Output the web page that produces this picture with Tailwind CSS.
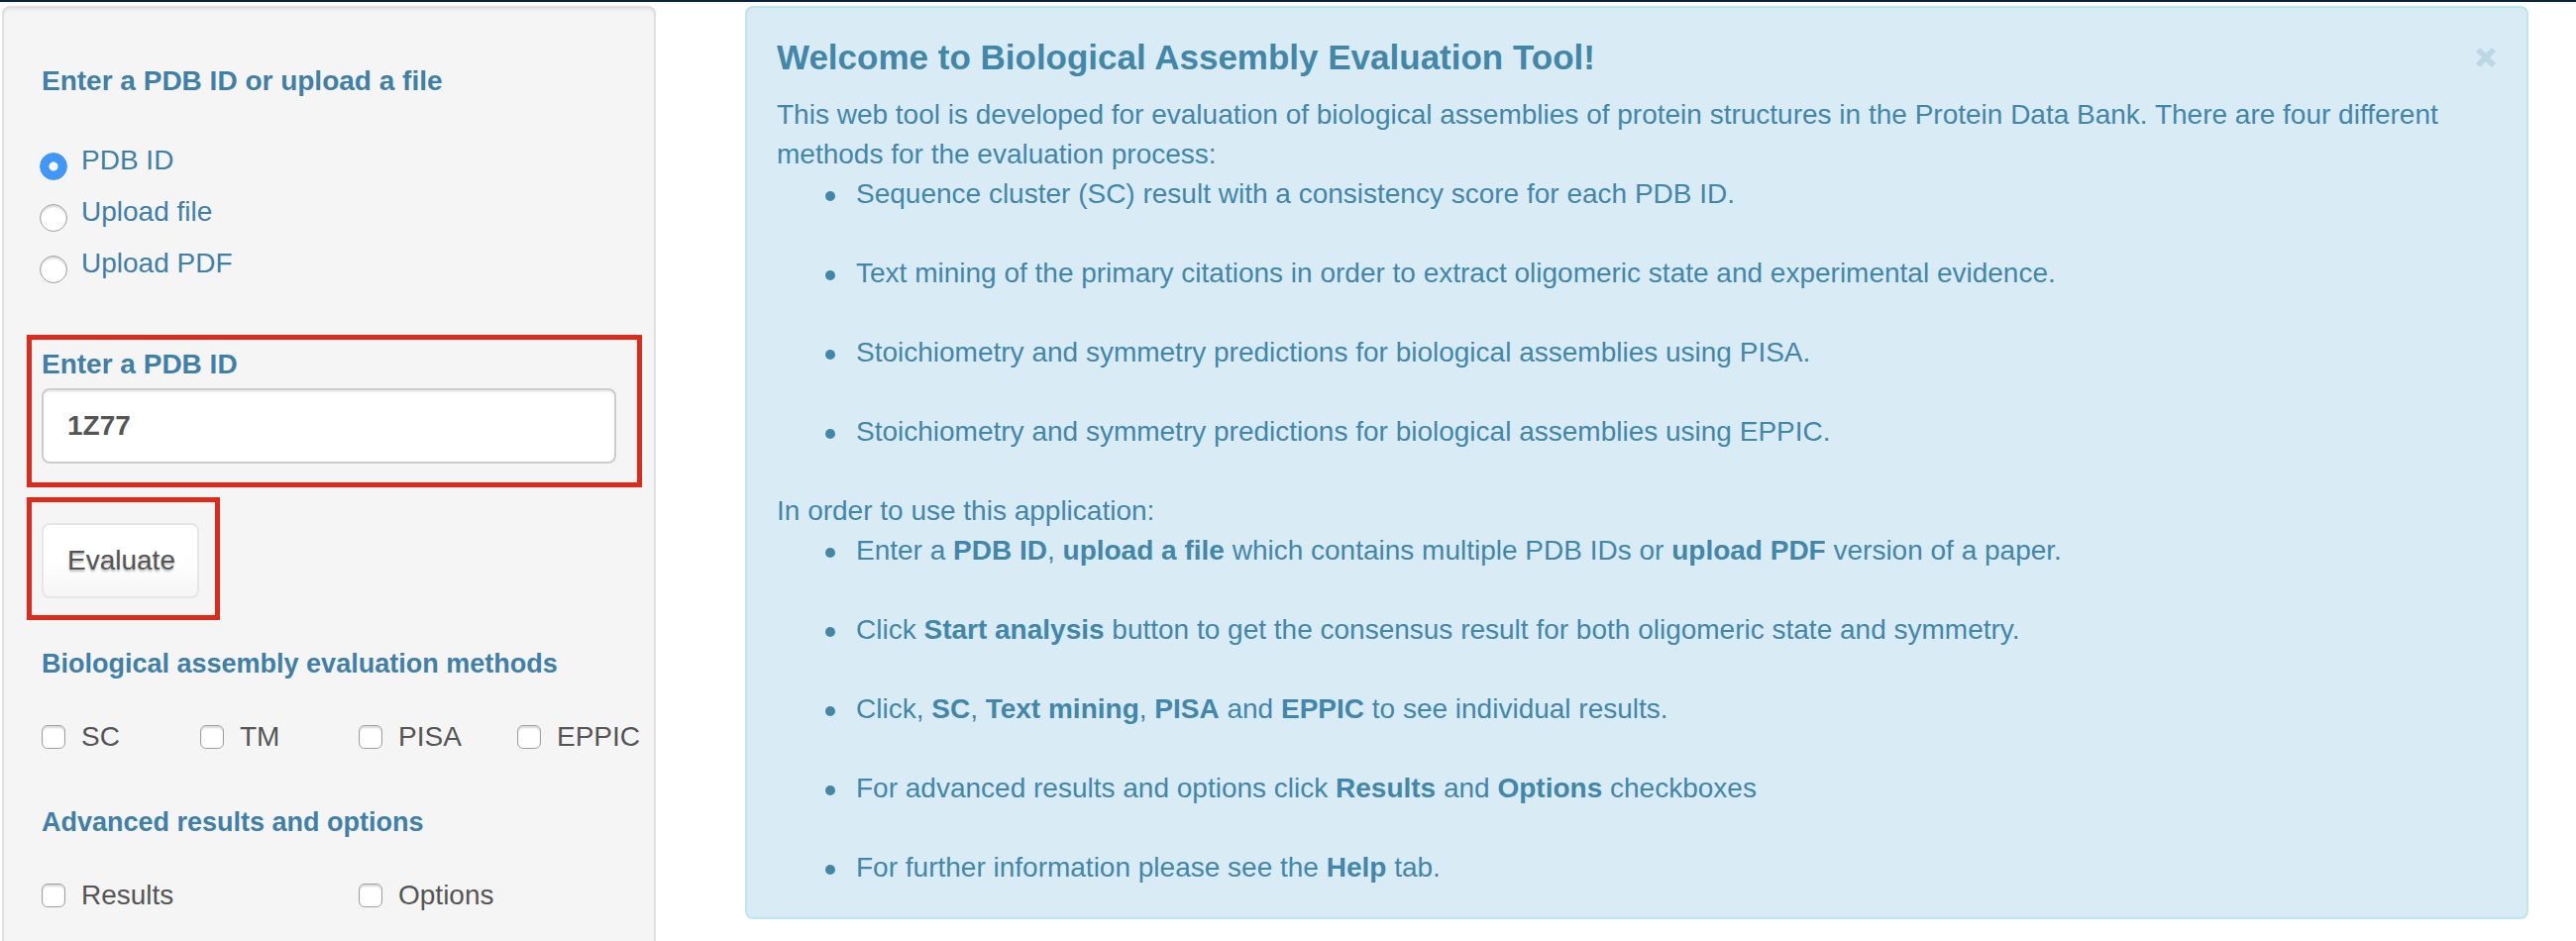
<!DOCTYPE html>
<html lang="en">
<head>
<meta charset="utf-8">
<title>Biological Assembly Evaluation Tool</title>
<script src="https://cdn.jsdelivr.net/npm/@tailwindcss/browser@4"></script>
</head>
<body class="flex min-h-screen flex-col bg-white font-['Liberation_Sans',Arial,sans-serif] text-[28px] leading-10 text-[#555555]">
<header class="relative z-10 h-[2px] bg-[#0a2240] shadow-[0_2px_20px_rgba(0,0,0,0.12)]"></header>
<div class="grid flex-1 grid-cols-[11fr_30fr] gap-[90px] pt-1 pr-12 pl-[2px]">

  <form class="rounded-t-lg border-2 border-b-0 border-[#e0e0e0] bg-[#f5f5f5] px-[38px] pt-[54px] pb-6 shadow-[inset_0_2px_2px_rgba(0,0,0,0.05)]">
    <fieldset class="text-[#3f7fa8]">
      <legend class="font-bold">Enter a PDB ID or upload a file</legend>
      <div class="mt-10 flex flex-col gap-3">
        <label class="flex items-start gap-[14px]"><input type="radio" name="source" checked class="mt-3 -ml-[2px] size-7 appearance-none rounded-full border border-[#a0a0a0] bg-white shadow-[inset_0_2px_2px_rgba(0,0,0,0.15)] checked:border-[#4197f8] checked:bg-[radial-gradient(circle,white_4px,#4197f8_5px)] checked:shadow-none">PDB ID</label>
        <label class="flex items-start gap-[14px]"><input type="radio" name="source" class="mt-3 -ml-[2px] size-7 appearance-none rounded-full border border-[#a0a0a0] bg-white shadow-[inset_0_2px_2px_rgba(0,0,0,0.15)] checked:border-[#4197f8] checked:bg-[radial-gradient(circle,white_4px,#4197f8_5px)] checked:shadow-none">Upload file</label>
        <label class="flex items-start gap-[14px]"><input type="radio" name="source" class="mt-3 -ml-[2px] size-7 appearance-none rounded-full border border-[#a0a0a0] bg-white shadow-[inset_0_2px_2px_rgba(0,0,0,0.15)] checked:border-[#4197f8] checked:bg-[radial-gradient(circle,white_4px,#4197f8_5px)] checked:shadow-none">Upload PDF</label>
      </div>
    </fieldset>

    <div class="mt-[52px] -mr-[26px] -ml-[15px] border-5 border-[#df2a1b] pt-[5px] pr-[21px] pb-[19px] pl-[10px]">
      <label for="pdb" class="block font-bold text-[#3f7fa8]">Enter a PDB ID</label>
      <input id="pdb" type="text" value="1Z77" class="mt-1 block h-[76px] w-full rounded-lg border-2 border-[#cccccc] bg-white px-6 text-[28px] font-bold text-[#555555] shadow-[inset_0_2px_2px_rgba(0,0,0,0.075)]">
    </div>

    <div class="mt-[10px] -ml-[15px] w-fit border-5 border-[#df2a1b] pt-[21px] pr-4 pb-[17px] pl-[10px]">
      <button type="button" class="block h-[76px] rounded-lg border-2 border-[#e6e6e6] bg-linear-to-b from-white from-50% to-[#f5f5f5] pr-[22px] pl-6 text-[#555555] text-shadow-[0_2px_2px_rgba(0,0,0,0.25)]">Evaluate</button>
    </div>

    <fieldset class="mt-6">
      <legend class="font-bold text-[27px] text-[#3f7fa8]">Biological assembly evaluation methods</legend>
      <div class="mt-[34px] -mr-10 grid grid-cols-4 gap-5">
        <label class="flex items-center gap-4"><input type="checkbox" class="size-6 shrink-0 appearance-none rounded-md border border-[#a0a0a0] bg-white shadow-[inset_0_2px_2px_rgba(0,0,0,0.15)] checked:bg-[#4197f8]">SC</label>
        <label class="flex items-center gap-4"><input type="checkbox" class="size-6 shrink-0 appearance-none rounded-md border border-[#a0a0a0] bg-white shadow-[inset_0_2px_2px_rgba(0,0,0,0.15)] checked:bg-[#4197f8]">TM</label>
        <label class="flex items-center gap-4"><input type="checkbox" class="size-6 shrink-0 appearance-none rounded-md border border-[#a0a0a0] bg-white shadow-[inset_0_2px_2px_rgba(0,0,0,0.15)] checked:bg-[#4197f8]">PISA</label>
        <label class="flex items-center gap-4"><input type="checkbox" class="size-6 shrink-0 appearance-none rounded-md border border-[#a0a0a0] bg-white shadow-[inset_0_2px_2px_rgba(0,0,0,0.15)] checked:bg-[#4197f8]">EPPIC</label>
      </div>
    </fieldset>

    <fieldset class="mt-[46px]">
      <legend class="font-bold text-[27px] text-[#3f7fa8]">Advanced results and options</legend>
      <div class="mt-[34px] -mr-10 grid grid-cols-2 gap-5">
        <label class="flex items-center gap-4"><input type="checkbox" class="size-6 shrink-0 appearance-none rounded-md border border-[#a0a0a0] bg-white shadow-[inset_0_2px_2px_rgba(0,0,0,0.15)] checked:bg-[#4197f8]">Results</label>
        <label class="flex items-center gap-4"><input type="checkbox" class="size-6 shrink-0 appearance-none rounded-md border border-[#a0a0a0] bg-white shadow-[inset_0_2px_2px_rgba(0,0,0,0.15)] checked:bg-[#4197f8]">Options</label>
      </div>
    </fieldset>
  </form>

  <main class="self-start rounded-lg border-2 border-[#bfe5ee] bg-[#d9ebf5] p-[30px] text-[#4287aa]">
    <div class="flex items-center justify-between">
      <h1 class="text-[35px] font-bold">Welcome to Biological Assembly Evaluation Tool!</h1>
      <button type="button" aria-label="Close" class="text-[#bbd8e4]">
        <svg viewBox="0 0 22 22" class="size-[22px]" fill="none" stroke="currentColor" stroke-width="6"><path d="M3 3L19 19M19 3L3 19"/></svg>
      </button>
    </div>
    <p class="mt-[18px] pr-12">This web tool is developed for evaluation of biological assemblies of protein structures in the Protein Data Bank. There are four different methods for the evaluation process:</p>
    <ul class="ml-20 flex flex-col gap-10 *:before:float-left *:before:mt-[17px] *:before:-ml-[31px] *:before:size-[10px] *:before:rounded-full *:before:bg-current *:before:content-['']">
      <li>Sequence cluster (SC) result with a consistency score for each PDB ID.</li>
      <li>Text mining of the primary citations in order to extract oligomeric state and experimental evidence.</li>
      <li>Stoichiometry and symmetry predictions for biological assemblies using PISA.</li>
      <li>Stoichiometry and symmetry predictions for biological assemblies using EPPIC.</li>
    </ul>
    <p class="mt-10">In order to use this application:</p>
    <ul class="ml-20 flex flex-col gap-10 *:before:float-left *:before:mt-[17px] *:before:-ml-[31px] *:before:size-[10px] *:before:rounded-full *:before:bg-current *:before:content-['']">
      <li>Enter a <b>PDB ID</b>, <b>upload a file</b> which contains multiple PDB IDs or <b>upload PDF</b> version of a paper.</li>
      <li>Click <b>Start analysis</b> button to get the consensus result for both oligomeric state and symmetry.</li>
      <li>Click, <b>SC</b>, <b>Text mining</b>, <b>PISA</b> and <b>EPPIC</b> to see individual results.</li>
      <li>For advanced results and options click <b>Results</b> and <b>Options</b> checkboxes</li>
      <li>For further information please see the <b>Help</b> tab.</li>
    </ul>
  </main>
</div>
</body>
</html>
